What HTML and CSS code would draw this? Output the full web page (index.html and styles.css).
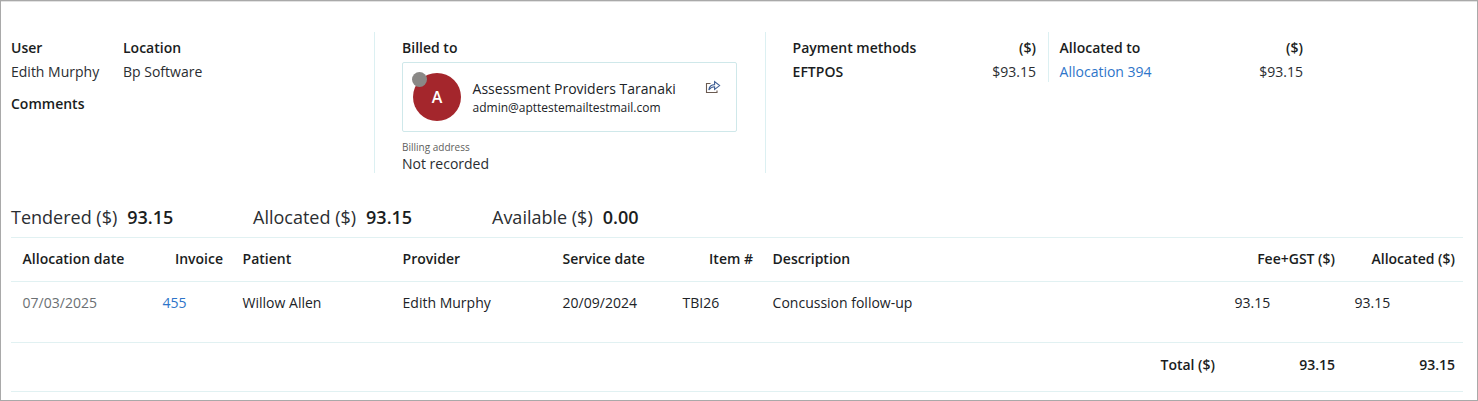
FILE: index.html
```html
<!DOCTYPE html>
<html lang="en">
<head>
<meta charset="utf-8">
<title>Payment details</title>
<link rel="stylesheet" href="styles.css">
</head>
<body>
<main class="frame">
  <section class="summary">
    <div class="col col-user">
      <div class="pair-row">
        <div class="pair pair-user">
          <div class="label">User</div>
          <div class="value">Edith Murphy</div>
        </div>
        <div class="pair">
          <div class="label">Location</div>
          <div class="value">Bp Software</div>
        </div>
      </div>
      <div class="label comments">Comments</div>
    </div>
    <div class="col col-billed">
      <div class="label">Billed to</div>
      <div class="card">
        <div class="avatar">A<span class="dot"></span></div>
        <div class="card-text">
          <div class="card-name">Assessment Providers Taranaki</div>
          <div class="card-mail">admin@apttestemailtestmail.com</div>
        </div>
        <svg class="share" width="16" height="16" viewBox="0 0 16 16" fill="none" stroke="#6a5a50" stroke-width="1.1">
          <path d="M5.5 4.5H1.5v9h10.5v-2"/>
          <path d="M3.8 11C4.3 7.6 6.6 5.7 9.6 5.6V2.6L14.6 6.6 9.6 10.4V7.7C7.3 7.7 5.3 8.8 3.8 11Z" stroke="#3f5f95"/>
        </svg>
      </div>
      <div class="addr-label">Billing address</div>
      <div class="value">Not recorded</div>
    </div>
    <div class="col col-methods">
      <div class="money-row">
        <span class="label">Payment methods</span><span class="label">($)</span>
      </div>
      <div class="money-row">
        <span class="label">EFTPOS</span><span class="value">$93.15</span>
      </div>
    </div>
    <div class="col col-alloc">
      <div class="money-row">
        <span class="label">Allocated to</span><span class="label">($)</span>
      </div>
      <div class="money-row">
        <a class="link" href="#">Allocation 394</a><span class="value">$93.15</span>
      </div>
    </div>
  </section>

  <section class="totals">
    <div class="total-item total-tendered">Tendered ($)<b>93.15</b></div>
    <div class="total-item total-allocated">Allocated ($)<b>93.15</b></div>
    <div class="total-item">Available ($)<b>0.00</b></div>
  </section>

  <section class="table">
    <div class="row row-head">
      <div class="cell">Allocation date</div>
      <div class="cell right">Invoice</div>
      <div class="cell">Patient</div>
      <div class="cell">Provider</div>
      <div class="cell">Service date</div>
      <div class="cell right">Item #</div>
      <div class="cell">Description</div>
      <div class="cell right">Fee+GST ($)</div>
      <div class="cell right">Allocated ($)</div>
    </div>
    <div class="row row-data">
      <div class="cell muted">07/03/2025</div>
      <div class="cell"><a class="link" href="#">455</a></div>
      <div class="cell">Willow Allen</div>
      <div class="cell">Edith Murphy</div>
      <div class="cell">20/09/2024</div>
      <div class="cell">TBI26</div>
      <div class="cell">Concussion follow-up</div>
      <div class="cell">93.15</div>
      <div class="cell">93.15</div>
    </div>
    <div class="row row-total">
      <div class="cell right total-label">Total ($)</div>
      <div class="cell right">93.15</div>
      <div class="cell right">93.15</div>
    </div>
  </section>
</main>
</body>
</html>
```
FILE: styles.css
```css
* { box-sizing: border-box; }
html, body { margin: 0; padding: 0; background: #fff; }
body {
  font-family: "Open Sans", "Noto Sans", sans-serif;
  font-size: 14px;
  line-height: 20px;
  color: #202327;
}
.frame {
  width: 1478px;
  height: 401px;
  border: 1px solid #a9a9a9;
  box-shadow: inset 0 1px 0 #e2e2e2;
  padding: 31px 14px 0 10px;
  overflow: hidden;
}
.summary { display: flex; height: 141px; }
.col { height: 100%; }
.col-user { width: 364px; padding-left: 0; border-right: 1px solid #dcf0f2; }
.pair-row { display: flex; padding-top: 6px; }
.pair { display: flex; flex-direction: column; gap: 4px; }
.pair-user { width: 112px; }
.label { font-weight: 600; color: #1a1d21; }
.value { color: #2a2d31; }
.comments { margin-top: 12px; }
.col-billed { width: 391px; padding: 6px 27px; border-right: 1px solid #dcf0f2; }
.card {
  display: flex;
  align-items: center;
  width: 335px;
  height: 70px;
  margin-top: 4px;
  padding: 0 10px;
  border: 1px solid #cfe8ea;
  border-radius: 2px;
}
.avatar {
  position: relative;
  flex: none;
  width: 48px;
  height: 48px;
  border-radius: 50%;
  background: #a4262c;
  color: #fff;
  font-weight: 600;
  font-size: 16px;
  line-height: 48px;
  text-align: center;
}
.dot {
  position: absolute;
  left: -1px;
  top: -1px;
  width: 15px;
  height: 15px;
  border-radius: 50%;
  background: #8a8886;
}
.card-text { margin-left: 11.6px; flex: 1; padding-top: 2px; }
.card-name { line-height: 18px; }
.card-mail { font-size: 12px; line-height: 18px; margin-top: 1px; letter-spacing: -0.01px; }
.share { align-self: flex-start; margin: 16px 5px 0 1px; }
.addr-label { margin-top: 8px; font-size: 10px; line-height: 14px; color: #605e5c; }
.col-methods { width: 283px; padding: 6px 12px 0 26.6px; height: 50px; border-right: 1px solid #dcf0f2; }
.col-alloc { width: 255px; padding: 6px 1px 0 10.6px; height: 50px; }
.money-row { display: flex; justify-content: space-between; margin-bottom: 4px; }
.link { color: #2e75c9; text-decoration: none; }
.totals { display: flex; margin-top: 31px; height: 33px; align-items: flex-start; font-size: 18px; line-height: 26px; color: #2b2e32; }
.total-item b { font-weight: 600; margin-left: 10px; color: #1a1d21; }
.total-tendered { width: 242px; }
.total-allocated { width: 239px; }
.table { border-top: 1px solid #e1f1f2; }
.row {
  display: grid;
  grid-template-columns: 140px 80px 160px 160px 120px 90px 1fr 120px 120px;
  border-bottom: 1px solid #e1f1f2;
}
.cell { padding: 0 8px 0 11.6px; }
.right { text-align: right; }
.row-head { height: 44px; padding-bottom: 2px; align-items: center; font-weight: 600; color: #1a1d21; }
.row-data { height: 61px; padding-top: 11px; }
.row-total { height: 49px; padding-bottom: 5px; align-items: center; font-weight: 600; color: #1a1d21; grid-template-columns: 1fr 120px 120px; }
.muted { color: #6b6f73; }
```
